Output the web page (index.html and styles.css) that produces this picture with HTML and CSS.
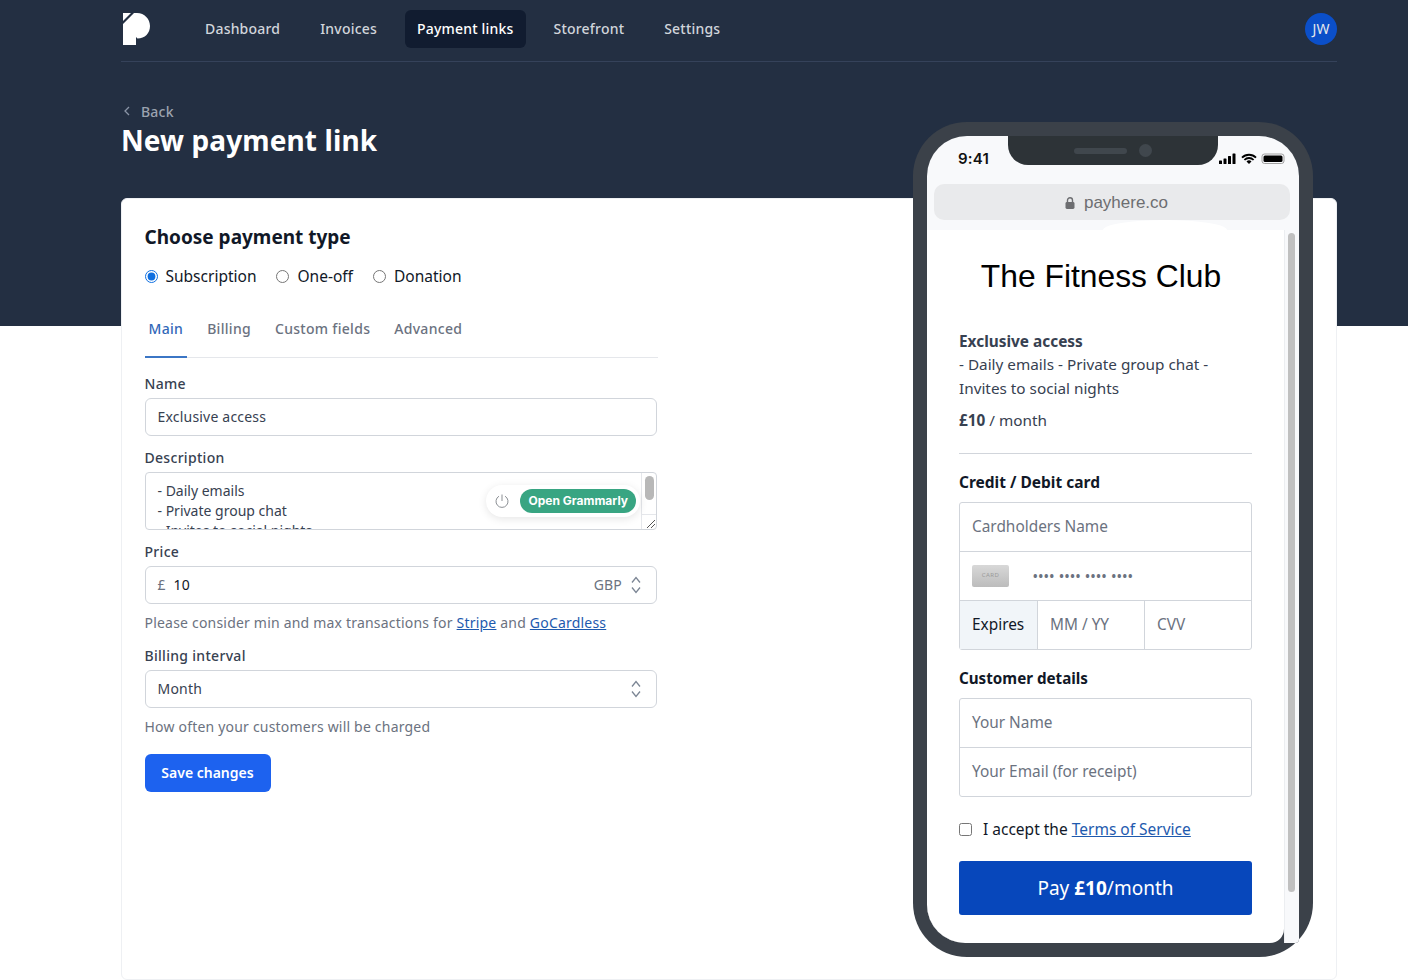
FILE: index.html
```html
<!DOCTYPE html>
<html lang="en">

<head>
    <meta charset="UTF-8">
    <meta name="viewport" content="width=device-width, initial-scale=1.0">
    <title>New payment link</title>
    <link rel="stylesheet" href="styles.css">
</head>

<body>
    <div class="band"></div>
    <div class="wrap">
        <nav class="topnav">
            <svg class="logo" width="30" height="32" viewBox="0 0 30 32">
                <path fill="#fff" d="M13 0H16C23.500 0 29 6 29 13C29 20 24 25.500 16.500 25.500L15 24V32H2V11Z" />
                <path fill="#fff" d="M2 0H10L2 8Z" />
            </svg>
            <a class="navlink">Dashboard</a>
            <a class="navlink">Invoices</a>
            <a class="navlink active">Payment links</a>
            <a class="navlink">Storefront</a>
            <a class="navlink">Settings</a>
            <div class="avatar">JW</div>
        </nav>

        <div class="heading">
            <a class="back">
                <svg width="12" height="12" viewBox="0 0 12 12">
                    <path d="M8 2L4 6L8 10" fill="none" stroke="#8a94a6" stroke-width="1.300" />
                </svg>
                Back
            </a>
            <h1>New payment link</h1>
        </div>

        <div class="card">
            <h2>Choose payment type</h2>
            <div class="radios">
                <label><input type="radio" name="type" checked>Subscription</label>
                <label><input type="radio" name="type">One-off</label>
                <label><input type="radio" name="type">Donation</label>
            </div>

            <div class="tabs">
                <a class="tab active">Main</a>
                <a class="tab">Billing</a>
                <a class="tab">Custom fields</a>
                <a class="tab">Advanced</a>
            </div>

            <div class="field">
                <label class="lbl">Name</label>
                <div class="input">Exclusive access</div>
            </div>

            <div class="field">
                <label class="lbl">Description</label>
                <div class="textarea">
                    <div class="textarea-text">- Daily emails<br>- Private group chat<br>- Invites to social nights</div>
                    <div class="grammarly">
                        <svg width="16" height="16" viewBox="0 0 16 16">
                            <path d="M8 1.500V8M5 3.200A6 6 0 1 0 11 3.200" fill="none" stroke="#8b8f94" stroke-width="1" />
                        </svg>
                        <span class="grammarly-btn">Open Grammarly</span>
                    </div>
                    <div class="textarea-bar">
                        <div class="textarea-thumb"></div>
                        <div class="textarea-grip">
                            <svg width="10" height="10" viewBox="0 0 10 10">
                                <path d="M1 9L9 1M5 9L9 5" stroke="#555" stroke-width="1" />
                            </svg>
                        </div>
                    </div>
                </div>
            </div>

            <div class="field price-field">
                <label class="lbl">Price</label>
                <div class="input price">
                    <span class="muted pound">£</span>
                    <span class="grow dark">10</span>
                    <span class="muted">GBP</span>
                    <svg class="updown" width="12" height="18" viewBox="0 0 12 18">
                        <path d="M2 6.500L6 1.500L10 6.500M2 11.500L6 16.500L10 11.500" fill="none" stroke="#7b8594" stroke-width="1.300" />
                    </svg>
                </div>
                <p class="hint">Please consider min and max transactions for <a>Stripe</a> and <a>GoCardless</a></p>
            </div>

            <div class="field">
                <label class="lbl">Billing interval</label>
                <div class="input price">
                    <span class="grow">Month</span>
                    <svg class="updown" width="12" height="18" viewBox="0 0 12 18">
                        <path d="M2 6.500L6 1.500L10 6.500M2 11.500L6 16.500L10 11.500" fill="none" stroke="#7b8594" stroke-width="1.300" />
                    </svg>
                </div>
                <p class="hint">How often your customers will be charged</p>
            </div>

            <button class="save">Save changes</button>
        </div>

        <div class="phone">
            <div class="screen">
                <div class="notch">
                    <span class="speaker"></span>
                    <span class="camera"></span>
                </div>
                <div class="statusbar">
                    <span class="time">9:41</span>
                    <svg width="66" height="12" viewBox="0 0 66 12">
                        <g fill="#000">
                            <rect x="0" y="7.500" width="3" height="3.500" rx="0.600" />
                            <rect x="4.500" y="5.500" width="3" height="5.500" rx="0.600" />
                            <rect x="9" y="3" width="3" height="8" rx="0.600" />
                            <rect x="13.500" y="0.500" width="3" height="10.500" rx="0.600" />
                            <path d="M30 11L27.500 8.400A3.600 3.600 0 0 1 32.500 8.400Z" />
                            <rect x="44.500" y="2.500" width="19" height="6.500" rx="1.500" />
                        </g>
                        <path d="M23 4.700A9.800 9.800 0 0 1 37 4.700M25.400 7A6.300 6.300 0 0 1 34.600 7" fill="none" stroke="#000" stroke-width="1.800" />
                        <rect x="43" y="1" width="22" height="9.500" rx="2.500" fill="none" stroke="#8a8a8a" stroke-width="0.800" />
                    </svg>
                </div>
                <div class="urlbar">
                    <svg width="12" height="14" viewBox="0 0 12 14">
                        <path d="M3.500 6V4.200A2.500 2.500 0 0 1 8.500 4.200V6" fill="none" stroke="#6d6e71" stroke-width="1.400" />
                        <rect x="1.500" y="6" width="9" height="7" rx="1.400" fill="#6d6e71" />
                    </svg>
                    payhere.co
                </div>

                <div class="viewport">
                    <div class="pay">
                        <div class="club">The Fitness Club</div>
                        <div class="product">Exclusive access</div>
                        <p class="desc">- Daily emails - Private group chat - Invites to social nights</p>
                        <p class="cost"><b>£10</b> / month</p>
                        <hr>
                        <div class="group-title">Credit / Debit card</div>
                        <div class="inputs">
                            <div class="row">Cardholders Name</div>
                            <div class="row cardrow">
                                <span class="cardicon">CARD</span>
                                <span class="dots">•••• •••• •••• ••••</span>
                            </div>
                            <div class="row expiry">
                                <span class="exp-label">Expires</span>
                                <span class="exp-date">MM / YY</span>
                                <span class="exp-cvv">CVV</span>
                            </div>
                        </div>
                        <div class="group-title second">Customer details</div>
                        <div class="inputs">
                            <div class="row">Your Name</div>
                            <div class="row">Your Email (for receipt)</div>
                        </div>
                        <label class="terms"><input type="checkbox">I accept the&nbsp;<a>Terms of Service</a></label>
                        <button class="pay-btn">Pay <b>£10</b>/month</button>
                    </div>
                    <div class="phone-scroll">
                        <div class="phone-thumb"></div>
                    </div>
                </div>
            </div>
        </div>
    </div>
</body>

</html>
```

FILE: styles.css
```css
* {
    box-sizing: border-box;
}

html,
body {
    height: 100%;
}

body {
    margin: 0;
    background-color: #fff;
    color: #111827;
    font-family: "Noto Sans", "DejaVu Sans", sans-serif;
    font-size: 14px;
    overflow: hidden;
}

a {
    text-decoration: none;
}

.band {
    position: absolute;
    top: 0;
    left: 0;
    right: 0;
    height: 326px;
    background-color: #232f42;
}

.wrap {
    position: relative;
    width: 1216px;
    margin-left: 121px;
}

/* top nav */
.topnav {
    display: flex;
    align-items: center;
    height: 62px;
    padding-bottom: 4px;
    border-bottom: 1px solid #35425a;
}

.logo {
    margin-right: 42px;
}

.navlink {
    margin-right: 16px;
    padding: 0 12px;
    height: 38px;
    line-height: 37px;
    border-radius: 6px;
    color: #d1d5db;
    font-size: 14px;
    font-weight: 500;
    letter-spacing: 0.2px;
}

.navlink.active {
    background-color: #111c30;
    color: #fff;
}

.avatar {
    margin-left: auto;
    width: 32px;
    height: 32px;
    line-height: 31px;
    text-align: center;
    border-radius: 50%;
    background-color: #0b4fc9;
    color: #e5e7eb;
    font-size: 14px;
}

/* heading */
.heading {
    padding-top: 39px;
    height: 136px;
}

.back {
    display: flex;
    align-items: center;
    gap: 8px;
    color: #9ca3af;
    font-size: 14px;
    font-weight: 500;
    letter-spacing: 0.2px;
    height: 20px;
}

h1 {
    margin: 0;
    color: #fff;
    font-size: 28px;
    line-height: 38px;
    font-weight: 700;
    letter-spacing: 0.1px;
}

/* card */
.card {
    height: 782px;
    padding: 24px 22.500px;
    background-color: #fff;
    border: 1px solid #eef0f3;
    border-radius: 6px;
}

h2 {
    margin: 0;
    font-size: 19px;
    line-height: 28px;
    font-weight: 700;
    color: #111827;
}

.radios {
    display: flex;
    gap: 20px;
    margin-top: 15px;
    font-size: 15.500px;
    line-height: 20px;
}

.radios label {
    display: flex;
    align-items: center;
}

.radios input {
    width: 13px;
    height: 13px;
    margin: 0 8px 0 0;
    accent-color: #0f6fe0;
}

.tabs {
    display: flex;
    width: 513px;
    margin-top: 33px;
    border-bottom: 1px solid #e5e7eb;
}

.tab {
    margin-right: 24px;
    padding: 0 0 18px;
    margin-bottom: -1px;
    line-height: 20px;
    color: #6b7280;
    font-weight: 500;
    letter-spacing: 0.3px;
}

.tab.active {
    margin-right: 20px;
    padding: 0 4px 17px;
    color: #3268b8;
    border-bottom: 2px solid #3b76c5;
}

.field {
    width: 512.500px;
    margin-bottom: 12px;
}

.tabs + .field {
    margin-top: 16px;
}

.price-field {
    margin-bottom: 13px;
}

.lbl {
    display: block;
    margin-bottom: 4px;
    line-height: 20px;
    color: #374151;
    font-weight: 500;
    letter-spacing: 0.3px;
}

.input {
    height: 38px;
    line-height: 36px;
    padding: 0 14px 0 12px;
    border: 1px solid #d1d5db;
    border-radius: 6px;
    color: #374151;
    letter-spacing: 0.2px;
}

.price {
    display: flex;
    align-items: center;
}

.grow {
    flex: 1;
}

.dark {
    color: #111827;
}

.muted {
    color: #6b7280;
}

.pound {
    width: 16px;
}

.updown {
    margin-left: 8px;
}

.textarea {
    position: relative;
    display: flex;
    height: 58px;
    overflow: hidden;
    border: 1px solid #d1d5db;
    border-radius: 4px;
}

.textarea-text {
    flex: 1;
    padding: 8px 12px;
    line-height: 20px;
    color: #374151;
}

.textarea-bar {
    display: flex;
    flex-direction: column;
    width: 15px;
    border-left: 1px solid #e5e7eb;
    padding-top: 3px;
}

.textarea-thumb {
    width: 9px;
    height: 24px;
    margin-left: 3px;
    border-radius: 5px;
    background-color: #b8b8b8;
}

.textarea-grip {
    display: flex;
    justify-content: flex-end;
    align-items: flex-end;
    margin-top: auto;
    height: 15px;
    border-top: 1px solid #e5e7eb;
}

.grammarly {
    position: absolute;
    top: 12px;
    right: 16px;
    display: flex;
    align-items: center;
    gap: 10px;
    height: 32px;
    padding: 0 4px 0 8px;
    background-color: #fff;
    border-radius: 16px;
    box-shadow: 0 2px 8px rgba(0, 0, 0, 0.1);
}

.grammarly-btn {
    height: 24px;
    padding: 0 8px;
    line-height: 23px;
    border-radius: 12px;
    background-color: #38a582;
    color: #fff;
    font-family: "Inter", sans-serif;
    font-size: 12px;
    font-weight: 700;
}

.hint {
    margin: 9px 0 0;
    line-height: 20px;
    color: #6b7280;
    letter-spacing: 0.2px;
}

.hint a {
    color: #1e5aae;
    text-decoration: underline;
}

.save {
    margin-top: 5px;
    width: 126px;
    height: 38px;
    padding: 0 0 2px;
    border: 0;
    border-radius: 6px;
    background-color: #1d62ef;
    color: #fff;
    font-family: inherit;
    font-size: 14px;
    font-weight: 600;
}

/* phone */
.phone {
    position: absolute;
    top: 122px;
    right: 24px;
    width: 400px;
    height: 835px;
    padding: 14px;
    background-color: #3b4149;
    border-radius: 54px;
}

.screen {
    position: relative;
    display: flex;
    flex-direction: column;
    height: 100%;
    overflow: hidden;
    background-color: #f8f9fb;
    border-radius: 40px 40px 4px 38px;
}

.notch {
    position: absolute;
    top: 0;
    left: 81px;
    display: flex;
    align-items: center;
    justify-content: center;
    gap: 12px;
    width: 210px;
    height: 29px;
    background-color: #2d3337;
    border-radius: 0 0 20px 20px;
}

.speaker {
    width: 53px;
    height: 6px;
    border-radius: 3px;
    background-color: #40474d;
}

.camera {
    width: 13px;
    height: 13px;
    border-radius: 50%;
    background-color: #40474d;
}

.statusbar {
    display: flex;
    align-items: center;
    justify-content: space-between;
    height: 48px;
    padding: 0 14px 3px 31px;
}

.time {
    font-family: "Inter", "Liberation Sans", sans-serif;
    font-size: 15px;
    font-weight: 600;
    letter-spacing: 0.2px;
    color: #111;
}

.urlbar {
    display: flex;
    align-items: center;
    justify-content: center;
    gap: 8px;
    flex: none;
    height: 36px;
    margin: 0 9px 0 7px;
    padding: 1px 0 0 8px;
    border-radius: 10px;
    background-color: #e9eaec;
    color: #6d6e71;
    font-family: "Liberation Sans", sans-serif;
    font-size: 17px;
}

.viewport {
    position: relative;
    display: flex;
    flex: 1;
    margin-top: 10px;
    min-height: 0;
    background-color: #3b4149;
}

/* the small white bump under the address bar */
.viewport::before {
    content: "";
    position: absolute;
    top: -10px;
    left: 176px;
    width: 124px;
    height: 20px;
    border-radius: 50%;
    background-color: #fff;
}

.pay {
    flex: 1;
    padding: 0 32px;
    overflow: hidden;
    background-color: #fff;
    border-bottom-right-radius: 14px;
}

.phone-scroll {
    width: 15px;
    flex: none;
    padding: 3px 4px 0 3px;
    background-color: #f8f9fb;
    border-left: 1px solid #eceef1;
}

.phone-thumb {
    height: 659px;
    border-radius: 4px;
    background-color: #c0c0c0;
}

.club {
    position: relative;
    margin: 26px 0 0 -8px;
    width: 300px;
    text-align: center;
    font-family: "Liberation Sans", sans-serif;
    font-size: 31.800px;
    line-height: 40px;
    color: #000;
}

.product {
    margin-top: 34px;
    font-size: 15.400px;
    line-height: 24px;
    font-weight: 700;
    color: #374151;
}

.desc {
    margin: -2px 0 0;
    font-size: 15.300px;
    line-height: 24px;
    color: #374151;
}

.cost {
    margin: 8px 0 0;
    font-size: 15.300px;
    line-height: 24px;
    color: #374151;
}

hr {
    margin: 21px 0 0;
    border: 0;
    border-top: 1px solid #d1d5db;
}

.group-title {
    margin-top: 16px;
    margin-bottom: 8px;
    font-size: 15.500px;
    line-height: 24px;
    font-weight: 700;
    color: #111827;
}

.group-title.second {
    margin-top: 16px;
    font-size: 15.200px;
}

.inputs {
    border: 1px solid #d1d5db;
    border-radius: 3px;
    font-size: 15.400px;
    color: #6b7280;
}

.row {
    height: 49px;
    line-height: 47px;
    padding: 0 12px;
    border-bottom: 1px solid #d1d5db;
}

.row:last-child {
    height: 48px;
    border-bottom: 0;
}

.cardrow {
    display: flex;
    align-items: center;
}

.cardicon {
    width: 37px;
    height: 22px;
    line-height: 20px;
    text-align: center;
    border-radius: 2px;
    background: linear-gradient(#d8d8d8, #bcbcbc);
    color: #9a9a9a;
    font-size: 6px;
    letter-spacing: 0.5px;
}

.dots {
    margin-left: 24px;
    font-size: 12px;
    font-weight: 700;
    letter-spacing: 1px;
    color: #6b7280;
}

.expiry {
    display: flex;
    padding: 0;
}

.exp-label {
    width: 78px;
    padding-left: 12px;
    background-color: #f1f5f9;
    border-right: 1px solid #d1d5db;
    color: #111827;
}

.exp-date {
    width: 107px;
    padding-left: 12px;
    border-right: 1px solid #d1d5db;
}

.exp-cvv {
    padding-left: 12px;
}

.terms {
    display: flex;
    align-items: center;
    margin-top: 20px;
    font-size: 15.500px;
    line-height: 24px;
    color: #111827;
}

.terms input {
    width: 13px;
    height: 13px;
    margin: 0 11px 0 0;
}

.terms a {
    color: #1e5aae;
    text-decoration: underline;
}

.pay-btn {
    display: block;
    width: 293px;
    height: 54px;
    margin-top: 20px;
    border: 0;
    border-radius: 3px;
    background-color: #0747bb;
    color: #fff;
    font-family: inherit;
    font-size: 19px;
}
```
